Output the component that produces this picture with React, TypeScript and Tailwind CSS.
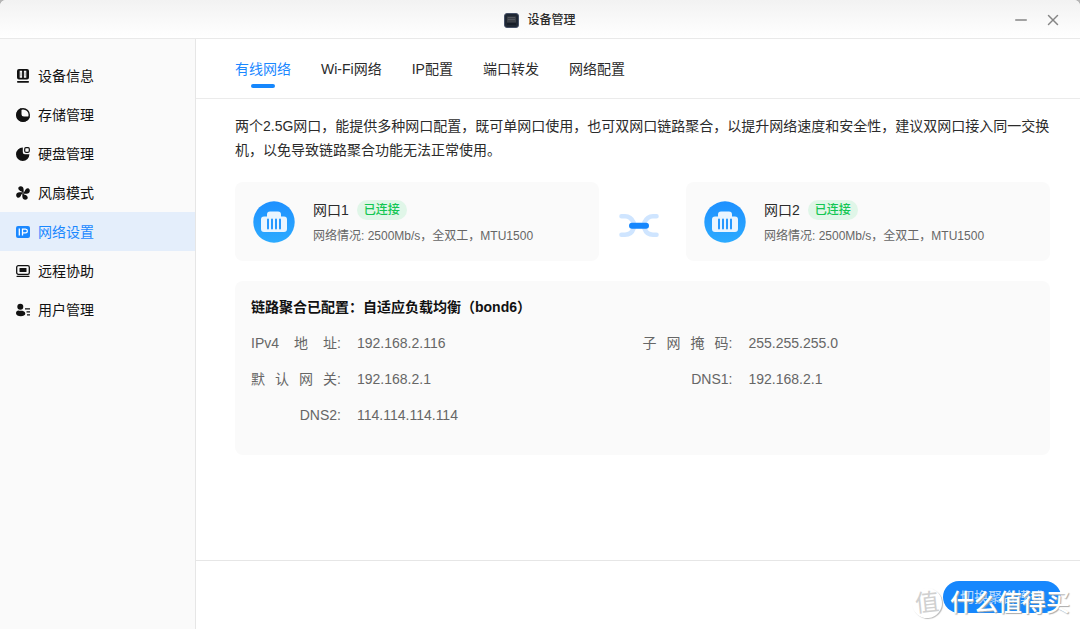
import React from 'react';
import { Minus, X } from 'lucide-react';

const DeviceIcon = () => (
  <svg width="14" height="14" viewBox="0 0 14 14" fill="currentColor">
    <path fillRule="evenodd" d="M3 0h8a2 2 0 0 1 2 2v6.5a2 2 0 0 1-2 2H3a2 2 0 0 1-2-2V2a2 2 0 0 1 2-2Zm.7 1.800v7h2.400v-7Zm4.200 0v7h2.400v-7Z" />
    <rect x="4.300" y="3.300" width="1.200" height="4" opacity=".3" />
    <rect x="8.500" y="3.300" width="1.200" height="4" opacity=".3" />
    <rect x="1" y="12" width="12" height="1.700" rx=".8" />
  </svg>
);

const StorageIcon = () => (
  <svg width="14" height="14" viewBox="0 0 14 14">
    <circle cx="7" cy="7" r="6.300" fill="none" stroke="currentColor" strokeWidth="1.400" />
    <path d="M5.500 0v6a2.500 2.500 0 0 0 2.500 2.500h6A7 7 0 1 1 5.500 0Z" fill="currentColor" />
  </svg>
);

const DiskIcon = () => (
  <svg width="14" height="14" viewBox="0 0 14 14">
    <path d="M6.800.6v4.600a2 2 0 0 0 2 2h4.600A6.700 6.700 0 1 1 6.800.6Z" fill="currentColor" />
    <rect x="8.700" y=".7" width="4.600" height="4.600" rx="1.200" fill="none" stroke="currentColor" strokeWidth="1.200" />
  </svg>
);

const FanIcon = () => (
  <svg width="14" height="14" viewBox="0 0 14 14" fill="currentColor">
    {[0, 90, 180, 270].map((deg) => (
      <path key={deg} transform={`rotate(${deg} 7 7)`} d="M6.500 6.800C6.500 5.800 5.500 5.400 4.300 4.900 2.600 4.100 1.800 2.500 2.600 1.300 3.600-.1 5.600-.2 6.700.9c1.200 1.300.9 3.400 1 5.700Z" />
    ))}
  </svg>
);

const IpIcon = () => (
  <svg width="14" height="14" viewBox="0 0 14 14">
    <rect y="1" width="14" height="12" rx="2" fill="currentColor" />
    <path d="M3.300 3.500v7M6.500 10.500V4.200h3a1.800 1.800 0 0 1 0 3.700h-3" fill="none" stroke="#fff" strokeWidth="1.300" />
  </svg>
);

const RemoteIcon = () => (
  <svg width="14" height="14" viewBox="0 0 14 14">
    <rect x=".7" y="1.700" width="12.600" height="8.600" rx="1.600" fill="none" stroke="currentColor" strokeWidth="1.300" />
    <rect x="3.500" y="4" width="7" height="4" rx=".5" fill="currentColor" />
    <rect x=".5" y="11.800" width="13" height="1.300" rx=".6" fill="currentColor" />
  </svg>
);

const UserIcon = () => (
  <svg width="14" height="14" viewBox="0 0 14 14" fill="currentColor">
    <circle cx="4.300" cy="3.800" r="3" />
    <path d="M0 10.300c0-2 1.600-3 3-2.600 1.500.4 2.600-.2 4 .2 1.600.5 2.300 1.500 2.300 2.800 0 1.600-2 2.500-4.500 2.500S0 12.300 0 10.300Z" />
    <path d="M9 5.200h5v1.300H9zM10.500 8.300H14v1.300h-3.500zM11 11.300h3v1.300h-3z" />
  </svg>
);

const PortIcon = () => (
  <svg className="size-[42px] shrink-0" viewBox="0 0 42 42">
    <defs>
      <linearGradient id="port-bg" x1="0" y1="0" x2="0" y2="1">
        <stop offset="0" stopColor="#1e90ff" />
        <stop offset="1" stopColor="#2cabff" />
      </linearGradient>
    </defs>
    <circle cx="21" cy="21" r="20.700" fill="url(#port-bg)" />
    <path d="M17 10.500h8a3 3 0 0 1 3 3v2h3a3 3 0 0 1 3 3V28a3 3 0 0 1-3 3H11a3 3 0 0 1-3-3v-9.500a3 3 0 0 1 3-3h3v-2a3 3 0 0 1 3-3Z" fill="#eaf5ff" />
    <path d="M15 18.500v9M19 18.500v9M23 18.500v9M27 18.500v9" stroke="#2799ff" strokeWidth="2" strokeLinecap="round" />
  </svg>
);

const LinkIcon = () => (
  <svg width="40" height="26" viewBox="0 0 40 26" fill="none" strokeLinecap="round">
    <path d="M2.500 3.300H6c4.500 0 7 2.700 8.500 6.200v6c-1.500 4.500-4 6.200-8.500 6.200H2.500M37.500 3.300H34c-4.500 0-7 2.700-8.500 6.200v6c1.500 4.500 4 6.200 8.500 6.200h3.500" stroke="#cfe5ff" strokeWidth="4.600" />
    <path d="M13 12.700h14" stroke="#1687fd" strokeWidth="6" />
  </svg>
);

const menu = [
  { label: '设备信息', icon: DeviceIcon },
  { label: '存储管理', icon: StorageIcon },
  { label: '硬盘管理', icon: DiskIcon },
  { label: '风扇模式', icon: FanIcon },
  { label: '网络设置', icon: IpIcon, active: true },
  { label: '远程协助', icon: RemoteIcon },
  { label: '用户管理', icon: UserIcon },
];

const tabs = ['有线网络', 'Wi-Fi网络', 'IP配置', '端口转发', '网络配置'];

// label parts are spread evenly over the label column
const details = [
  { label: ['IPv4', '地', '址'], value: '192.168.2.116' },
  { label: ['子', '网', '掩', '码'], value: '255.255.255.0' },
  { label: ['默', '认', '网', '关'], value: '192.168.2.1' },
  { label: ['DNS1'], value: '192.168.2.1' },
  { label: ['DNS2'], value: '114.114.114.114' },
];

const PortCard: React.FC<{ name: string }> = ({ name }) => (
  <section className="flex-1 flex items-center gap-[18px] h-[79px] px-[18px] rounded-lg bg-[#fafafa]">
    <PortIcon />
    <div className="pt-1">
      <div className="flex items-center gap-2">
        <h2 className="text-sm leading-6">{name}</h2>
        <span className="px-[7px] rounded-full bg-[#e0f6e8] text-xs leading-5 font-medium text-[#13c653]">已连接</span>
      </div>
      <p className="text-xs leading-7 text-[#666]">网络情况: 2500Mb/s，全双工，MTU1500</p>
    </div>
  </section>
);

export default function App() {
  return (
    <div className="bg-[#b5b5b5] font-['Liberation_Sans','Noto_Sans_CJK_SC',sans-serif] text-sm text-[#2b2b2b]">
      <div className="min-h-screen flex flex-col rounded-t-md bg-white overflow-hidden">
        <header className="relative flex items-center justify-center gap-2 h-[39px] pt-0.5 border-b border-[#e9e9e9] bg-linear-to-b from-[#f2f2f2] to-white">
          <svg width="15" height="15" viewBox="0 0 15 15">
            <rect x=".5" y=".5" width="14" height="14" rx="2.500" fill="#1f2733" stroke="#465168" />
            <path d="M3 3.500h9v6H3z" fill="#3c4047" />
            <path d="M4 4.500h7M4 6.500h7" stroke="#5b6068" strokeWidth=".7" />
            <path d="M3 11h9" stroke="#151b26" strokeWidth="1.500" />
          </svg>
          <h1 className="text-xs font-medium">设备管理</h1>
          <div className="absolute right-[18px] flex gap-[14px] text-[#858585]">
            <button aria-label="最小化"><Minus size={18} strokeWidth={2} /></button>
            <button aria-label="关闭"><X size={18} strokeWidth={2} /></button>
          </div>
        </header>

        <div className="flex-1 flex">
          <nav className="w-[196px] shrink-0 pt-[17px] border-r border-[#e6e6e6] bg-[#fafafa]">
            {menu.map(({ label, icon: Icon, active }) => (
              <a
                key={label}
                href="#"
                className={`flex items-center gap-2 h-[39px] px-4 ${active ? 'bg-[#e4eefb] text-[#1b88ff]' : 'text-[#111]'}`}
              >
                <Icon /> {label}
              </a>
            ))}
          </nav>

          <main className="flex-1 flex flex-col">
            <div className="flex gap-[30px] h-[60px] px-[39px] border-b border-[#ebebeb]">
              {tabs.map((tab, i) => (
                <button key={tab} className={`relative flex items-center ${i === 0 ? 'text-[#1b88ff]' : ''}`}>
                  {tab}
                  {i === 0 && <span className="absolute bottom-[10px] left-4 w-6 h-1 rounded-full bg-[#1687fd]" />}
                </button>
              ))}
            </div>

            <div className="flex-1 pt-[15px] pl-[39px] pr-[30px]">
              <p className="-mr-3 leading-6">
                两个2.5G网口，能提供多种网口配置，既可单网口使用，也可双网口链路聚合，以提升网络速度和安全性，建议双网口接入同一交换机，以免导致链路聚合功能无法正常使用。
              </p>

              <div className="flex items-center mt-5">
                <PortCard name="网口1" />
                <div className="w-[87px] flex justify-center pt-2 pr-2">
                  <LinkIcon />
                </div>
                <PortCard name="网口2" />
              </div>

              <section className="mt-5 px-4 pt-3 pb-[22px] rounded-lg bg-[#fafafa]">
                <h2 className="mb-1 font-bold leading-7 text-[#111]">链路聚合已配置：自适应负载均衡（bond6）</h2>
                <dl className="grid grid-cols-2 text-[#666]">
                  {details.map(({ label, value }) => (
                    <div key={label.join('')} className="flex items-center h-9">
                      <dt className="flex w-[90px]">
                        <span className={`flex-1 flex ${label.length > 1 ? 'justify-between' : 'justify-end'}`}>
                          {label.map((part) => <span key={part}>{part}</span>)}
                        </span>
                        :
                      </dt>
                      <dd className="ml-4">{value}</dd>
                    </div>
                  ))}
                </dl>
              </section>
            </div>

            <footer className="relative flex justify-end items-center h-[69px] px-[19px] border-t border-[#e6e6e6]">
              <button className="h-8 w-[118px] mt-1 rounded-full bg-[#1687fd] text-white/70">切换聚合模式</button>
              <div className="absolute right-[10px] bottom-[10px] flex items-center gap-2 text-2xl text-white [text-shadow:1px_1px_1px_#aaa] pointer-events-none">
                <span className="flex items-center justify-center size-[30px] rounded-full shadow-[1px_1px_1px_#bbb] -rotate-6 text-[#d0d0d0] [text-shadow:none]">值</span>
                <span className="font-medium">什么值得买</span>
              </div>
            </footer>
          </main>
        </div>
      </div>
    </div>
  );
}
